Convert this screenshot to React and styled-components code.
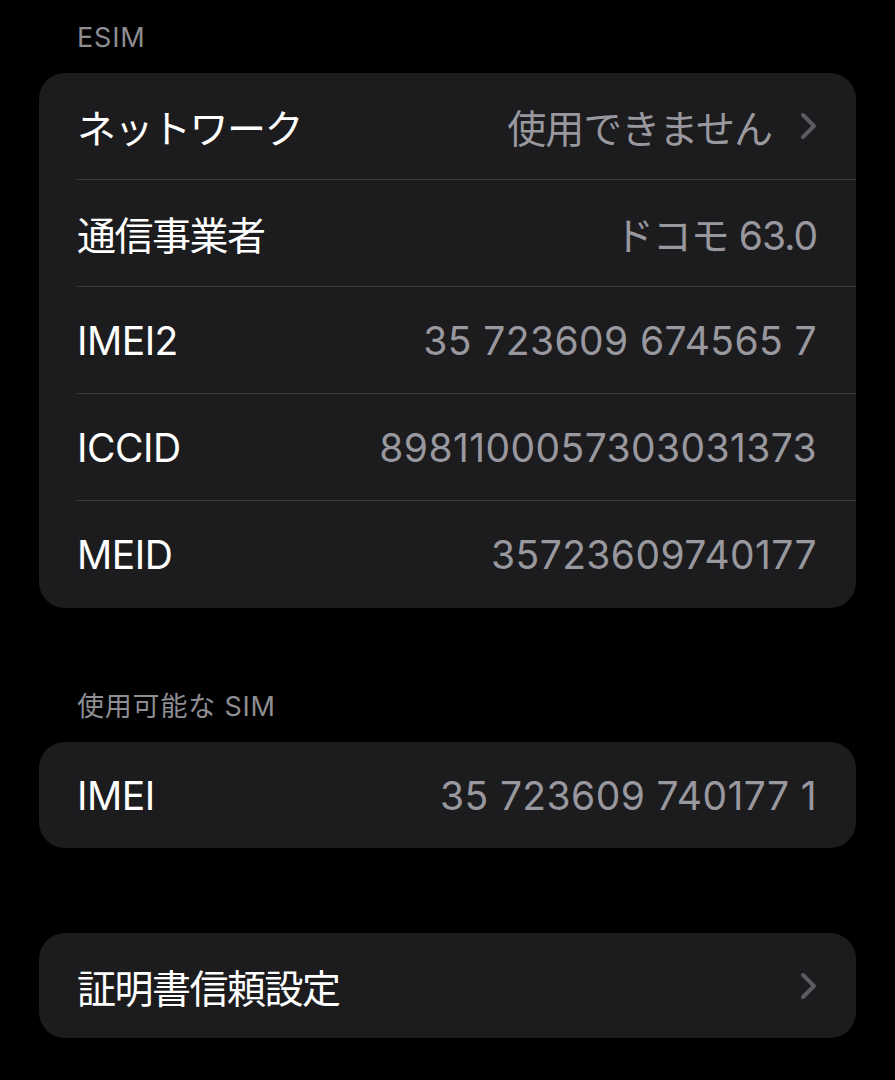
import React from "react";
import styled, { createGlobalStyle } from "styled-components";

const GlobalStyle = createGlobalStyle`
  html, body {
    margin: 0;
    padding: 0;
    background: #000;
  }
  body {
    font-family: Inter, "Noto Sans CJK JP", sans-serif;
    -webkit-font-smoothing: antialiased;
  }
`;

const Page = styled.div`
  display: flex;
  flex-direction: column;
  padding: 23px 39px 40px;
  min-height: 1080px;
  box-sizing: border-box;
`;

const Section = styled.section`
  display: flex;
  flex-direction: column;
  margin-top: ${(p) => p.gap || 0}px;
`;

const Header = styled.div`
  padding-left: 38px;
  height: 30px;
  line-height: 30px;
  margin-bottom: 20px;
  font-size: 27px;
  letter-spacing: 0.8px;
  color: #8d8d92;
`;

const Card = styled.div`
  background: #1c1c1e;
  border-radius: 26px;
  overflow: hidden;
`;

const Row = styled.div`
  display: flex;
  padding-left: 38px;
`;

const RowInner = styled.div`
  flex: 1;
  display: flex;
  align-items: center;
  justify-content: space-between;
  height: ${(p) => p.h || 107}px;
  box-sizing: border-box;
  padding-right: 39px;
  border-bottom: ${(p) => (p.last ? "none" : "1px solid #39393c")};
`;

const Label = styled.span`
  font-size: 39px;
  letter-spacing: ${(p) => (p.jp ? "-1.5px" : "-0.5px")};
  color: #fff;
`;

const Value = styled.span`
  display: flex;
  align-items: center;
  gap: 28px;
  font-size: 39px;
  letter-spacing: ${(p) => (p.jp ? "-1px" : "0.4px")};
  color: #98989e;
`;

const Chevron = () => (
  <svg width="17" height="28" viewBox="0 0 17 28" fill="none">
    <path
      d="M3 3 L14 14 L3 25"
      stroke="#5b5b60"
      strokeWidth="4"
      strokeLinecap="round"
      strokeLinejoin="round"
    />
  </svg>
);

const esim = [
  { label: "ネットワーク", value: "使用できません", link: true, jp: true },
  { label: "通信事業者", value: "ドコモ 63.0", jp: true },
  { label: "IMEI2", value: "35 723609 674565 7" },
  { label: "ICCID", value: "8981100057303031373" },
  { label: "MEID", value: "35723609740177" },
];

const Item = ({ label, value, link, last, h, jp }) => (
  <Row>
    <RowInner last={last} h={h}>
      <Label jp={jp}>{label}</Label>
      <Value jp={jp}>
        {value}
        {link && <Chevron />}
      </Value>
    </RowInner>
  </Row>
);

export default function App() {
  return (
    <>
      <GlobalStyle />
      <Page>
        <Section>
          <Header>ESIM</Header>
          <Card>
            {esim.map((r, i) => (
              <Item key={r.label} {...r} last={i === esim.length - 1} />
            ))}
          </Card>
        </Section>
        <Section gap={84}>
          <Header>使用可能な SIM</Header>
          <Card>
            <Item label="IMEI" value="35 723609 740177 1" last h={106} />
          </Card>
        </Section>
        <Section gap={85}>
          <Card>
            <Item label="証明書信頼設定" value="" link last h={105} jp />
          </Card>
        </Section>
      </Page>
    </>
  );
}
